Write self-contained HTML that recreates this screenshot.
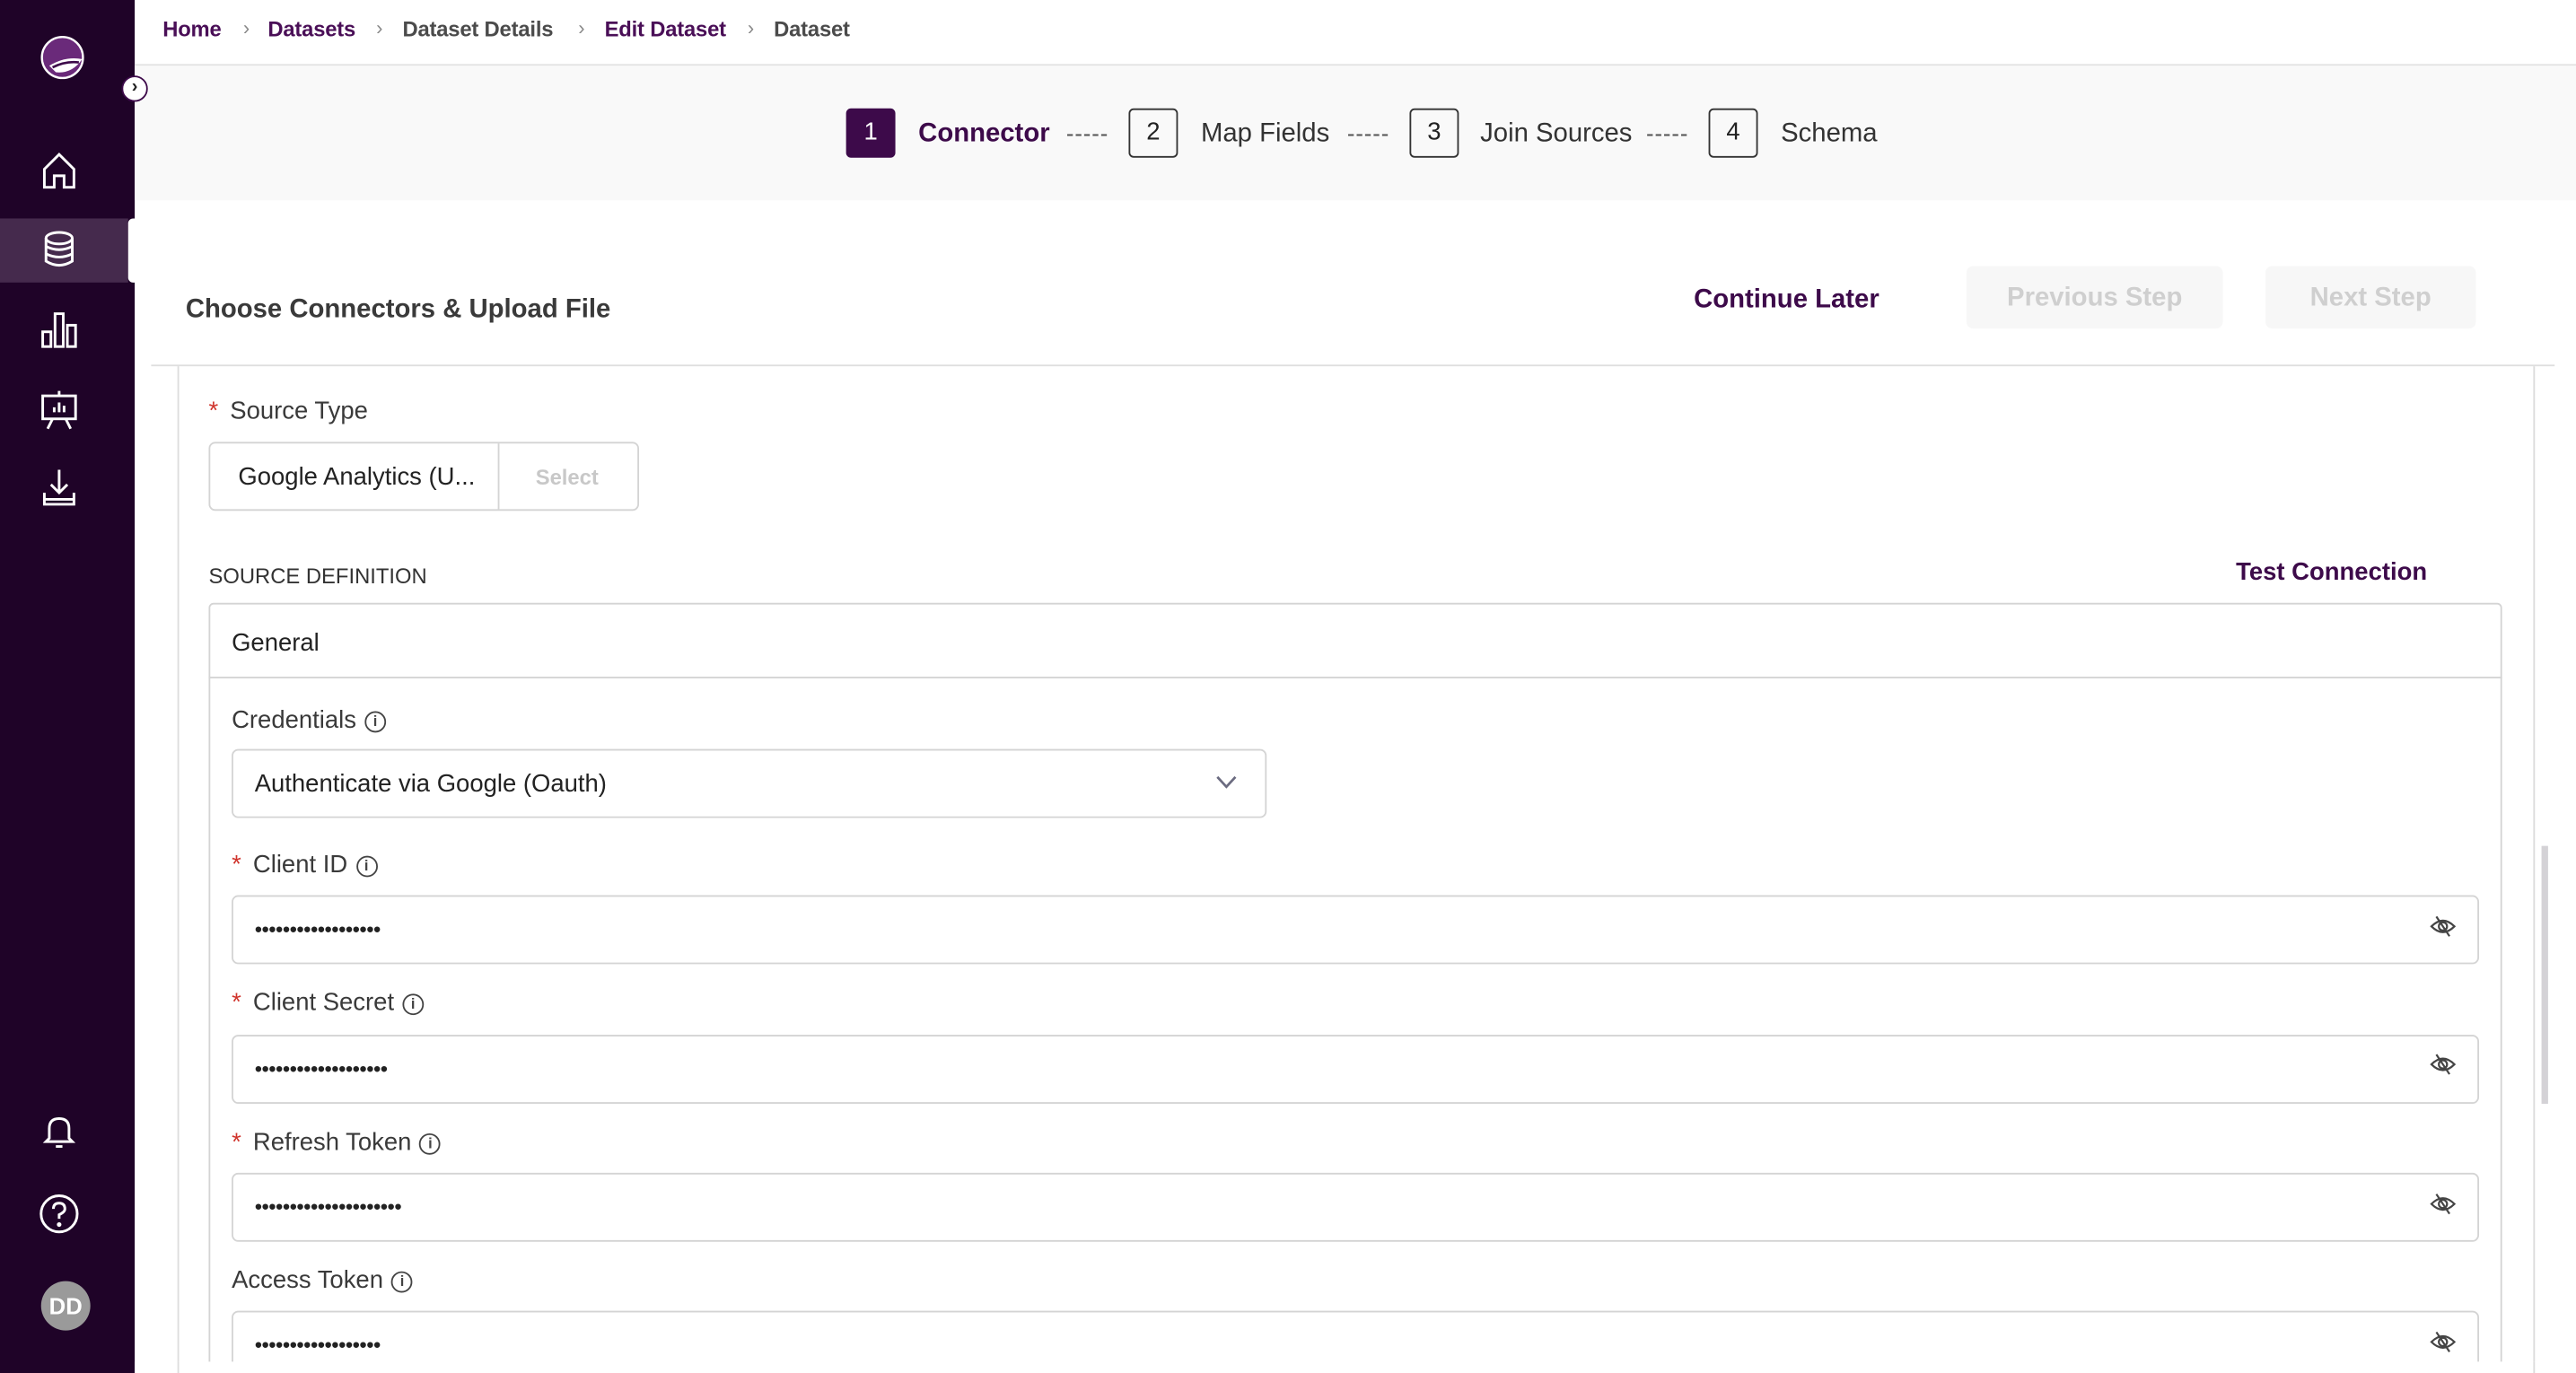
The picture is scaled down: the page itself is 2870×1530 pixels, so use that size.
<!DOCTYPE html>
<html><head><meta charset="utf-8">
<style>
html,body{margin:0;padding:0;width:2870px;height:1530px;overflow:hidden;background:#fff}
#w{position:absolute;left:0;top:0;width:1568px;height:836px;overflow:hidden;transform:scale(1.83036);transform-origin:0 0;font-family:"Liberation Sans",sans-serif;color:#333}
.a{position:absolute}
.sb{left:0;top:0;width:82px;height:836px;background:#1f0328}
.ic{position:absolute;left:22px;width:28px;height:28px}
.bc{top:10px;font-size:13px;font-weight:bold;letter-spacing:-0.1px}
.p{color:#4a0f57}.g{color:#4b4b4b}
.sep{top:10px;color:#888;font-size:12px}
.box{width:28px;height:28px;border:1.3px solid #333;border-radius:3px;text-align:center;line-height:28px;font-size:15px;color:#222}
.st{font-size:16px;color:#333;top:73px}
.dash{top:73px;font-size:14px;color:#555;letter-spacing:0.5px}
.lbl{font-size:15px;color:#3a3a3a}
.req{color:#d0342c;margin-right:3px}
.in{border:1px solid #d4d4d4;border-radius:4px;background:#fff}
.dots{font-size:13px;color:#222;letter-spacing:-0.3px}
.info{display:inline-block;width:11px;height:11px;border:1.2px solid #444;border-radius:50%;font-size:9px;line-height:11px;text-align:center;vertical-align:1px;margin-left:5px;color:#444;font-weight:bold}
</style></head><body><div id="w">
<div class="a sb"></div>
<div class="a" style="left:0;top:133px;width:78px;height:39px;background:#452a4d"></div>
<div class="a" style="left:78px;top:133px;width:6px;height:39px;background:#fff;border-radius:3px 0 0 3px"></div>
<svg class="a" style="left:24px;top:21px" width="28" height="28" viewBox="0 0 28 28"><circle cx="14" cy="14" r="12.5" fill="#6a2a7a" stroke="#fff" stroke-width="1.3"/><path d="M6 19 Q16 13 26 15 Q20 24 10 23 Z" fill="#fff"/><path d="M8 20 Q16 16 24 17" stroke="#3d0a4a" stroke-width="1.5" fill="none"/></svg>
<svg class="ic" style="top:90px" viewBox="0 0 28 28" fill="none" stroke="#fff" stroke-width="1.6"><path d="M5 13 L14 4 L23 13 V24 H17 V17 H11 V24 H5 Z"/></svg>
<svg class="ic" style="top:138px" viewBox="0 0 28 28" fill="none" stroke="#fff" stroke-width="1.6"><ellipse cx="14" cy="7" rx="8" ry="3.5"/><path d="M6 7 V21 Q14 26 22 21 V7"/><path d="M6 12 Q14 16 22 12"/><path d="M6 16.5 Q14 20.5 22 16.5"/></svg>
<svg class="ic" style="top:187px" viewBox="0 0 28 28" fill="none" stroke="#fff" stroke-width="1.6"><rect x="4" y="15" width="5" height="9"/><rect x="11.5" y="4" width="5" height="20"/><rect x="19" y="11" width="5" height="13"/></svg>
<svg class="ic" style="top:235px" viewBox="0 0 28 28" fill="none" stroke="#fff" stroke-width="1.6"><path d="M14 3 V6"/><rect x="4" y="6" width="20" height="14"/><path d="M10 20 L7 26 M18 20 L21 26"/><path d="M11 16 V13 M14 16 V10 M17 16 V12"/></svg>
<svg class="ic" style="top:283px" viewBox="0 0 28 28" fill="none" stroke="#fff" stroke-width="1.6"><path d="M14 3 V17 M9 12 L14 17 L19 12"/><path d="M5 17 V24 H23 V17"/><path d="M5 21 H23"/></svg>
<svg class="ic" style="top:674px" viewBox="0 0 28 28" fill="none" stroke="#fff" stroke-width="1.6"><path d="M8 19 V13 Q8 7 14 7 Q20 7 20 13 V19 L22 21 H6 Z"/><path d="M12 24 H16"/></svg>
<svg class="ic" style="top:725px" viewBox="0 0 28 28" fill="none" stroke="#fff" stroke-width="1.6"><circle cx="14" cy="14" r="11"/><path d="M10.5 11 Q10.5 7.5 14 7.5 Q17.5 7.5 17.5 11 Q17.5 13 14 14.5 V17"/><circle cx="14" cy="20.5" r="0.6" fill="#fff"/></svg>
<div class="a" style="left:25px;top:780px;width:30px;height:30px;border-radius:50%;background:#9a9a9a;color:#fff;font-weight:bold;font-size:14px;text-align:center;line-height:30px">DD</div>

<div class="a bc p" style="left:99px">Home</div>
<div class="a sep" style="left:148px">›</div>
<div class="a bc p" style="left:163px">Datasets</div>
<div class="a sep" style="left:229px">›</div>
<div class="a bc g" style="left:245px">Dataset Details</div>
<div class="a sep" style="left:352px">›</div>
<div class="a bc p" style="left:368px">Edit Dataset</div>
<div class="a sep" style="left:455px">›</div>
<div class="a bc g" style="left:471px">Dataset</div>
<div class="a" style="left:82px;top:39px;width:1486px;height:1px;background:#e2e2e2"></div>
<div class="a" style="left:82px;top:40px;width:1486px;height:82px;background:#f9f9f9"></div>
<div class="a" style="left:74px;top:46px;width:14px;height:14px;border-radius:50%;background:#fff;border:1.5px solid #3d0a4a;font-size:11px;line-height:13px;text-align:center;color:#222;font-weight:bold">›</div>

<div class="a box" style="left:515px;top:66px;background:#3d0a4a;border-color:#3d0a4a;color:#fff">1</div>
<div class="a st" style="left:559px;font-weight:bold;color:#3d0a4a">Connector</div>
<div class="a dash" style="left:649px">-----</div>
<div class="a box" style="left:687px;top:66px">2</div>
<div class="a st" style="left:731px">Map Fields</div>
<div class="a dash" style="left:820px">-----</div>
<div class="a box" style="left:858px;top:66px">3</div>
<div class="a st" style="left:901px">Join Sources</div>
<div class="a dash" style="left:1002px">-----</div>
<div class="a box" style="left:1040px;top:66px">4</div>
<div class="a st" style="left:1084px">Schema</div>

<div class="a" style="left:113px;top:180px;font-size:16px;font-weight:bold;color:#3a3a3a">Choose Connectors &amp; Upload File</div>
<div class="a" style="left:1031px;top:174px;font-size:16px;font-weight:bold;color:#3d0a4a">Continue Later</div>
<div class="a" style="left:1197px;top:162px;width:156px;height:38px;background:#f7f7f7;border-radius:4px;color:#cfcfcf;font-weight:bold;font-size:16px;text-align:center;line-height:40px">Previous Step</div>
<div class="a" style="left:1379px;top:162px;width:128px;height:38px;background:#f7f7f7;border-radius:4px;color:#cfcfcf;font-weight:bold;font-size:16px;text-align:center;line-height:40px">Next Step</div>
<div class="a" style="left:92px;top:222px;width:1463px;height:1px;background:#dedede"></div>
<div class="a" style="left:108px;top:223px;width:1px;height:613px;background:#dcdcdc"></div>
<div class="a" style="left:1542px;top:223px;width:1px;height:613px;background:#dcdcdc"></div>
<div class="a" style="left:1547px;top:515px;width:4px;height:157px;background:#d4d2d6"></div>

<div class="a lbl" style="left:127px;top:242px"><span class="req">*</span> Source Type</div>
<div class="a in" style="left:127px;top:269px;width:260px;height:40px"></div>
<div class="a" style="left:303px;top:270px;width:1px;height:40px;background:#d4d4d4"></div>
<div class="a" style="left:145px;top:282px;font-size:15px;color:#222">Google Analytics (U...</div>
<div class="a" style="left:326px;top:283px;font-size:13px;color:#c8c8c8;font-weight:bold">Select</div>

<div class="a" style="left:127px;top:343px;font-size:13px;color:#333">SOURCE DEFINITION</div>
<div class="a" style="left:1361px;top:340px;font-size:15px;font-weight:bold;color:#3d0a4a">Test Connection</div>

<div class="a" style="left:127px;top:367px;width:1394px;height:480px;border:1px solid #d4d4d4;border-radius:3px"></div>
<div class="a" style="left:127px;top:412px;width:1396px;height:1px;background:#d4d4d4"></div>
<div class="a" style="left:141px;top:383px;font-size:15px;color:#222">General</div>

<div class="a lbl" style="left:141px;top:430px">Credentials<span class="info">i</span></div>
<div class="a in" style="left:141px;top:456px;width:628px;height:40px"></div>
<div class="a" style="left:155px;top:469px;font-size:15px;color:#222">Authenticate via Google (Oauth)</div>
<svg class="a" style="left:740px;top:472px" width="13" height="9" viewBox="0 0 13 9" fill="none" stroke="#6b6b80" stroke-width="1.5"><path d="M1 1 L6.5 7 L12 1"/></svg>

<div class="a lbl" style="left:141px;top:518px"><span class="req">*</span> Client ID<span class="info">i</span></div>
<div class="a in" style="left:141px;top:545px;width:1366px;height:40px"></div>
<div class="a dots" style="left:155px;top:558px">••••••••••••••••••</div>

<div class="a lbl" style="left:141px;top:602px"><span class="req">*</span> Client Secret<span class="info">i</span></div>
<div class="a in" style="left:141px;top:630px;width:1366px;height:40px"></div>
<div class="a dots" style="left:155px;top:643px">•••••••••••••••••••</div>

<div class="a lbl" style="left:141px;top:687px"><span class="req">*</span> Refresh Token<span class="info">i</span></div>
<div class="a in" style="left:141px;top:714px;width:1366px;height:40px"></div>
<div class="a dots" style="left:155px;top:727px">•••••••••••••••••••••</div>

<div class="a lbl" style="left:141px;top:771px">Access Token<span class="info">i</span></div>
<div class="a in" style="left:141px;top:798px;width:1366px;height:40px"></div>
<div class="a dots" style="left:155px;top:811px">••••••••••••••••••</div>
<div class="a" style="left:82px;top:829px;width:1486px;height:7px;background:#fff"></div>
<div class="a" style="left:108px;top:829px;width:1px;height:7px;background:#dcdcdc"></div>
<div class="a" style="left:1542px;top:829px;width:1px;height:7px;background:#dcdcdc"></div>

<svg class="a" style="left:1479px;top:557px" width="16" height="14" viewBox="0 0 16 14" fill="none" stroke="#444" stroke-width="1.2"><path d="M1 7 Q8 0 15 7 Q8 14 1 7 Z"/><circle cx="8" cy="7" r="2.5"/><path d="M4 1 L12 13"/></svg>
<svg class="a" style="left:1479px;top:641px" width="16" height="14" viewBox="0 0 16 14" fill="none" stroke="#444" stroke-width="1.2"><path d="M1 7 Q8 0 15 7 Q8 14 1 7 Z"/><circle cx="8" cy="7" r="2.5"/><path d="M4 1 L12 13"/></svg>
<svg class="a" style="left:1479px;top:726px" width="16" height="14" viewBox="0 0 16 14" fill="none" stroke="#444" stroke-width="1.2"><path d="M1 7 Q8 0 15 7 Q8 14 1 7 Z"/><circle cx="8" cy="7" r="2.5"/><path d="M4 1 L12 13"/></svg>
<svg class="a" style="left:1479px;top:810px" width="16" height="14" viewBox="0 0 16 14" fill="none" stroke="#444" stroke-width="1.2"><path d="M1 7 Q8 0 15 7 Q8 14 1 7 Z"/><circle cx="8" cy="7" r="2.5"/><path d="M4 1 L12 13"/></svg>
</div></body></html>
